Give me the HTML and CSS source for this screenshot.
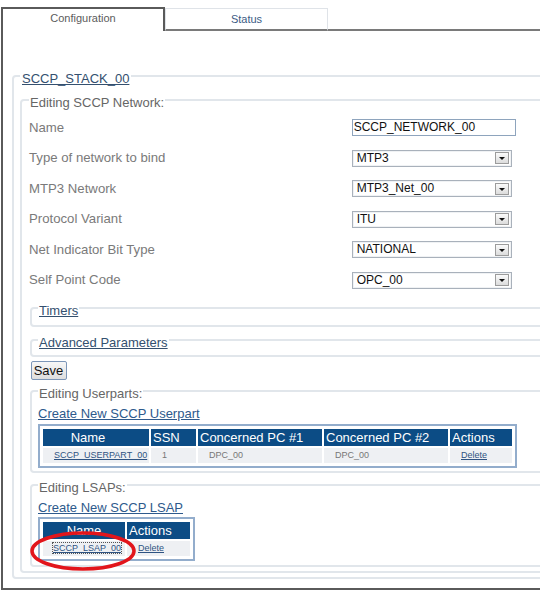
FILE: index.html
```html
<!DOCTYPE html>
<html>
<head>
<meta charset="utf-8">
<title>SCCP Configuration</title>
<link rel="stylesheet" href="styles.css">
</head>
<body>
<div class="tabs">
  <div class="tab tab-active">Configuration</div>
  <div class="tab tab-status">Status</div>
  <div class="tab-fill"></div>
</div>
<div class="panel">
  <fieldset class="fs fs-stack">
    <legend><a href="#" class="lnk-dark">SCCP_STACK_00</a></legend>
    <fieldset class="fs fs-net">
      <legend class="lg-plain">Editing SCCP Network:</legend>
      <div class="form">
        <div class="label">Name</div>
        <div class="ctl"><div class="input">SCCP_NETWORK_00</div></div>
        <div class="label">Type of network to bind</div>
        <div class="ctl"><div class="select"><span class="val">MTP3</span><span class="arrow"><i></i></span></div></div>
        <div class="label">MTP3 Network</div>
        <div class="ctl"><div class="select"><span class="val">MTP3_Net_00</span><span class="arrow"><i></i></span></div></div>
        <div class="label">Protocol Variant</div>
        <div class="ctl"><div class="select"><span class="val">ITU</span><span class="arrow"><i></i></span></div></div>
        <div class="label">Net Indicator Bit Type</div>
        <div class="ctl"><div class="select"><span class="val">NATIONAL</span><span class="arrow"><i></i></span></div></div>
        <div class="label">Self Point Code</div>
        <div class="ctl"><div class="select"><span class="val">OPC_00</span><span class="arrow"><i></i></span></div></div>
      </div>
      <fieldset class="fs fs-sub fs-timers">
        <legend><a href="#" class="lnk-dark">Timers</a></legend>
      </fieldset>
      <fieldset class="fs fs-sub fs-adv">
        <legend><a href="#" class="lnk-dark">Advanced Parameters</a></legend>
      </fieldset>
      <button class="save" type="button">Save</button>
      <fieldset class="fs fs-sub fs-list">
        <legend class="lg-plain">Editing Userparts:</legend>
        <a href="#" class="create">Create New SCCP Userpart</a>
        <table class="grid">
          <tr>
            <th class="c-name c-center-off">Name</th>
            <th class="c-ssn">SSN</th>
            <th class="c-pc">Concerned PC #1</th>
            <th class="c-pc">Concerned PC #2</th>
            <th class="c-act">Actions</th>
          </tr>
          <tr>
            <td><a href="#" class="cell-link">SCCP_USERPART_00</a></td>
            <td>1</td>
            <td>DPC_00</td>
            <td>DPC_00</td>
            <td><a href="#" class="cell-link">Delete</a></td>
          </tr>
        </table>
      </fieldset>
      <fieldset class="fs fs-sub fs-list fs-last">
        <legend class="lg-plain">Editing LSAPs:</legend>
        <a href="#" class="create">Create New SCCP LSAP</a>
        <table class="grid">
          <tr>
            <th class="c-lname">Name</th>
            <th class="c-lact">Actions</th>
          </tr>
          <tr>
            <td class="td-lname"><a href="#" class="cell-link focused">SCCP_LSAP_00</a></td>
            <td><a href="#" class="cell-link">Delete</a></td>
          </tr>
        </table>
      </fieldset>
    </fieldset>
  </fieldset>
</div>
<svg class="mark" width="112" height="44" viewBox="0 0 112 44">
  <ellipse cx="55" cy="22" rx="51" ry="18" fill="none" stroke="#e2151b" stroke-width="3.5"/>
</svg>
</body>
</html>
```
FILE: styles.css
```css
html, body {
  margin: 0;
  padding: 0;
  overflow: hidden;
  background: #fff;
}
body {
  font-family: "Liberation Sans", Arial, sans-serif;
  width: 540px;
  height: 599px;
  position: relative;
}

/* tabs */
.tabs {
  display: flex;
  align-items: flex-end;
  margin-top: 7px;
  padding-left: 1px;
  width: 700px;
}
.tab {
  box-sizing: border-box;
  text-align: center;
  font-size: 11px;
}
.tab-active {
  width: 164px;
  height: 24px;
  border: 2px solid #5a5a5a;
  border-bottom: none;
  color: #5c5c5c;
  line-height: 18px;
}
.tab-status {
  width: 163px;
  height: 23px;
  border: 1px solid #dfe3e8;
  border-bottom: 2px solid #7a7a7a;
  color: #3b5b85;
  line-height: 20px;
}
.tab-fill {
  flex: 1;
  height: 2px;
  background: #7a7a7a;
}

/* panel */
.panel {
  margin-left: 1px;
  width: 700px;
  border-left: 2px solid #5a5a5a;
  border-bottom: 2px solid #5a5a5a;
  padding-top: 34px;
  padding-bottom: 9px;
}

/* fieldsets */
.fs {
  margin: 0;
  border: 2px solid #e1e6eb;
  border-radius: 4px;
  min-width: 0;
}
.fs legend {
  font-size: 13px;
  line-height: 15px;
  padding: 6px 1px 0;
}
.fs-stack {
  margin-left: 9px;
  padding: 3px 0 4px 6px;
}
.fs-stack > legend {
  padding: 6px 2px 0;
}
.fs-net {
  padding: 2px 0 4px 7px;
}
.lg-plain {
  color: #666;
}
.lnk-dark {
  color: #34506f;
  text-decoration: underline;
}

/* form rows */
.form {
  display: grid;
  grid-template-columns: 322.7px 1fr;
  grid-auto-rows: 30.5px;
  align-items: center;
}
.label {
  font-size: 13.2px;
  color: #7a7a7a;
}
.ctl {
  display: flex;
  align-items: center;
  padding-top: 1px;
}
.input {
  box-sizing: border-box;
  width: 164px;
  height: 17px;
  border: 1px solid #8ea4bd;
  font-size: 12px;
  line-height: 15px;
  padding-left: 1px;
  color: #111;
}
.select {
  box-sizing: border-box;
  width: 160px;
  height: 17px;
  border: 1px solid #a9b1bb;
  box-shadow: inset 0 0 0 1px #f0f2f4;
  display: flex;
  align-items: center;
  justify-content: space-between;
  font-size: 12px;
  color: #111;
}
.val {
  padding-left: 4px;
  line-height: 15px;
}
.arrow {
  box-sizing: border-box;
  width: 14px;
  height: 12px;
  margin-right: 2px;
  border: 1px solid #9c9c9c;
  background: linear-gradient(#fbfbfb, #dcdcdc);
  display: flex;
  align-items: center;
  justify-content: center;
}
.arrow i {
  display: block;
  width: 0;
  height: 0;
  border-left: 3px solid transparent;
  border-right: 3px solid transparent;
  border-top: 3px solid #111;
  margin-top: 1px;
}

/* sub fieldsets */
.fs-sub {
  margin-left: 1px;
  padding: 0 0 0 6px;
}
.fs-timers {
  margin-top: 2px;
  padding-bottom: 7px;
}
.fs-adv {
  margin-top: 2px;
  padding-bottom: 5px;
}
.save {
  display: block;
  margin: 4px 0 0 1.5px;
  box-sizing: border-box;
  width: 36px;
  height: 19px;
  padding: 0;
  border: 1px solid #7c96b8;
  border-radius: 2px;
  background: linear-gradient(#f7f7f7, #dedede);
  font-family: "Liberation Sans", Arial, sans-serif;
  font-size: 13px;
  color: #111;
}
.fs-list {
  padding-bottom: 3px;
}
.fs-last {
  margin-top: 1px;
  padding-bottom: 4px;
}
.create {
  display: block;
  width: max-content;
  margin-top: 5px;
  font-size: 13px;
  line-height: 15px;
  color: #2e5a8c;
  text-decoration: underline;
}

/* tables */
.grid {
  margin-top: 2px;
  border: 2px solid #93adcc;
  padding: 1px;
  border-collapse: separate;
  border-spacing: 2px;
  font-family: "Liberation Sans", Arial, sans-serif;
}
.fs-list .grid {
  margin-top: 3px;
}
.fs-last .grid {
  margin-top: 2px;
}
.grid th {
  box-sizing: border-box;
  height: 17px;
  padding: 0 0 0 2px;
  background: #0c4c85;
  color: #fff;
  font-weight: normal;
  font-size: 13px;
  line-height: 17px;
  text-align: left;
}
.grid td {
  box-sizing: border-box;
  height: 15px;
  padding: 0 0 0 11px;
  background: #eef0f3;
  color: #777;
  font-size: 9px;
  line-height: 13px;
  white-space: nowrap;
}
.c-name { width: 106px; text-align: center !important; padding: 0 16px 0 0 !important; }
.c-ssn { width: 45px; }
.c-pc { width: 124px; }
.c-act { width: 62px; }
.c-lname { width: 82px; text-align: center !important; padding: 0 !important; }
.c-lact { width: 63px; }
.td-lname { padding-left: 10px !important; }
.cell-link {
  color: #2e5382;
  text-decoration: underline;
}
.focused {
  outline: 1px dotted #555;
  outline-offset: 0;
}

/* red annotation ellipse */
.mark {
  position: absolute;
  left: 28px;
  top: 529px;
}
```
